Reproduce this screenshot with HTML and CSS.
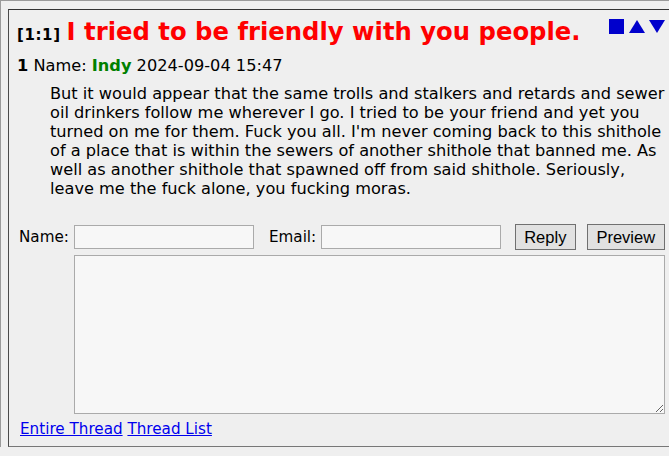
FILE: index.html
```html
<!DOCTYPE html>
<html lang="en">
<head>
<meta charset="utf-8">
<title>I tried to be friendly with you people.</title>
<link rel="stylesheet" href="styles.css">
</head>
<body>
<div class="frame">
  <div class="thread">
    <div class="head">
      <span class="count">[1:1]</span>
      <h2 class="title">I tried to be friendly with you people.</h2>
      <nav class="nav">
        <a href="#menu" class="navlink"><svg width="15" height="15" viewBox="0 0 15 15"><rect width="15" height="15" fill="#0000cc"/></svg></a>
        <a href="#prev" class="navlink"><svg width="16" height="13" viewBox="0 0 16 13"><polygon points="8,0 16,13 0,13" fill="#0000cc"/></svg></a>
        <a href="#next" class="navlink"><svg width="16" height="13" viewBox="0 0 16 13"><polygon points="0,0 16,0 8,13" fill="#0000cc"/></svg></a>
      </nav>
    </div>
    <div class="post">
      <div class="meta"><b>1</b> Name: <b class="name">Indy</b> 2024-09-04 15:47</div>
      <p class="body">But it would appear that the same trolls and stalkers and retards and sewer oil drinkers follow me wherever I go. I tried to be your friend and yet you turned on me for them. Fuck you all. I'm never coming back to this shithole of a place that is within the sewers of another shithole that banned me. As well as another shithole that spawned off from said shithole. Seriously, leave me the fuck alone, you fucking moras.</p>
    </div>
    <form class="reply">
      <label class="lbl lbl-name" for="name">Name:</label>
      <input class="field" id="name" type="text">
      <label class="lbl lbl-email" for="email">Email:</label>
      <input class="field" id="email" type="text">
      <button class="btn btn-reply" type="button">Reply</button>
      <button class="btn btn-preview" type="button">Preview</button>
      <textarea class="msg"></textarea>
    </form>
    <div class="links"><a href="#all">Entire Thread</a> <a href="#list">Thread List</a></div>
  </div>
</div>
</body>
</html>
```

FILE: styles.css
```css
html, body {
  margin: 0;
  padding: 0;
  overflow: hidden;
  background: #efefef;
}
body {
  font-family: "DejaVu Sans", Verdana, sans-serif;
  font-size: 16.2px;
  color: #000;
}
.frame {
  border-top: 1px solid #9a9a9a;
  border-left: 1px solid #9a9a9a;
  padding: 8px 0 0 7px;
  width: 720px;
}
.thread {
  width: 652px;
  background: #efefef;
  border: 1px solid #333;
  border-left-color: #4a4a4a;
  border-bottom-color: #777;
  padding: 0 8px 7px 8px;
}
.head {
  display: flex;
  align-items: baseline;
  margin-top: 8px;
}
.count {
  font-size: 15px;
  font-weight: bold;
  letter-spacing: 0.6px;
  margin-right: 6px;
}
.title {
  margin: 0;
  font-size: 24.3px;
  line-height: 28px;
  font-weight: bold;
  color: #ff0000;
}
.nav {
  margin-left: auto;
  margin-right: 4px;
  align-self: flex-start;
  margin-top: 1px;
  display: flex;
  align-items: flex-start;
}
.navlink {
  display: block;
  line-height: 0;
}
.navlink + .navlink {
  margin-left: 5px;
  margin-top: 1px;
}
.navlink:last-child {
  margin-left: 4px;
}
.meta {
  margin-top: 10px;
  line-height: 19px;
}
.name {
  color: #008000;
}
.body {
  margin: 9px 0 0 33px;
  line-height: 19px;
}
.reply {
  display: grid;
  grid-template-columns: auto 180px auto 180px auto auto;
  grid-template-rows: 26px 159px;
  align-items: center;
  row-gap: 5px;
  margin: 26px 0 0 2px;
  justify-content: start;
}
.lbl {
  font-size: 15.2px;
  line-height: 19px;
}
.lbl-name {
  padding-right: 5px;
}
.lbl-email {
  margin-left: 15px;
  padding-right: 4.5px;
}
.field {
  box-sizing: border-box;
  width: 180px;
  height: 24px;
  margin: 0;
  padding: 0 3px;
  background: #f7f7f7;
  border: 1px solid #aaa;
  border-radius: 0;
  font-family: "DejaVu Sans", sans-serif;
  font-size: 14px;
}
.btn {
  box-sizing: border-box;
  height: 26px;
  margin: 0;
  padding: 0 8.5px;
  background: #e1e1e1;
  border: 1px solid #707070;
  border-radius: 0;
  font-family: "Liberation Sans", Arial, sans-serif;
  font-size: 16.5px;
  color: #000;
}
.btn-reply {
  margin-left: 14px;
}
.btn-preview {
  margin-left: 11px;
}
.msg {
  grid-column: 2 / -1;
  box-sizing: border-box;
  width: 100%;
  height: 159px;
  margin: 0;
  background: #f7f7f7;
  border: 1px solid #aaa;
  border-radius: 0;
  align-self: start;
}
.links {
  margin: 6px 0 0 3px;
  line-height: 19px;
  font-size: 15.2px;
}
.links a {
  color: #0000ee;
}
```
